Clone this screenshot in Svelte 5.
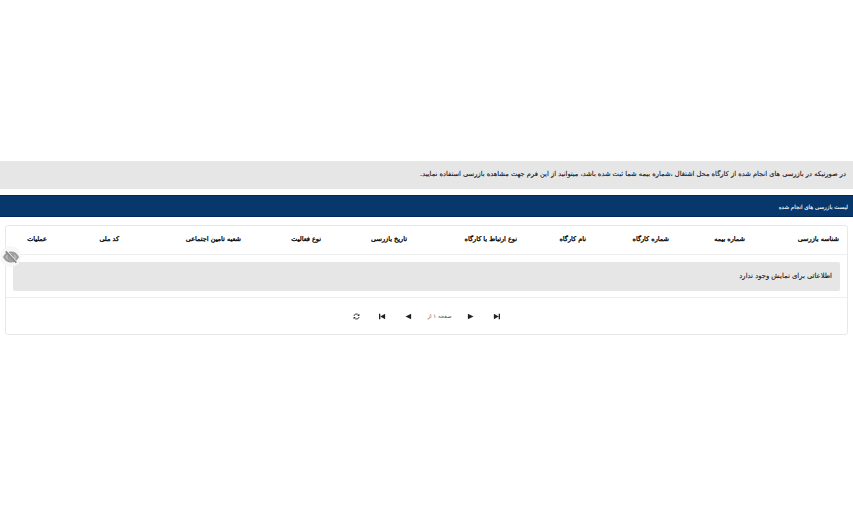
<script>
  const columns = [
    { title: 'شناسه بازرسی', width: 94 },
    { title: 'شماره بیمه', width: 76 },
    { title: 'شماره کارگاه', width: 83 },
    { title: 'نام کارگاه', width: 69 },
    { title: 'نوع ارتباط با کارگاه', width: 110 },
    { title: 'تاریخ بازرسی', width: 86 },
    { title: 'نوع فعالیت', width: 80 },
    { title: 'شعبه تامین اجتماعی', width: 122 },
    { title: 'کد ملی', width: 72 },
    { title: 'عملیات', width: 43 }
  ];
</script>

<main dir="rtl">
  <p class="notice">در صورتیکه در بازرسی های انجام شده از کارگاه محل اشتغال ،شماره بیمه شما ثبت شده باشد، میتوانید از این فرم جهت مشاهده بازرسی استفاده نمایید.</p>
  <div class="title-bar">لیست بازرسی های انجام شده</div>

  <section class="card">
    <div class="head">
      {#each columns as col}
        <div class="cell" style="width: {col.width}px">{col.title}</div>
      {/each}
    </div>

    <div class="body">
      <div class="empty">اطلاعاتی برای نمایش وجود ندارد</div>
    </div>

    <div class="pager">
      <button aria-label="last">
        <svg viewBox="0 0 8 8"><path d="M8 .8H6.500v6.400H8zM1 .8v6.400L6.500 4z" /></svg>
      </button>
      <button aria-label="next">
        <svg viewBox="0 0 8 8"><path d="M1 .8v6.400L7.500 4z" /></svg>
      </button>
      <span class="page-text">صفحه ۱ از</span>
      <button aria-label="previous">
        <svg viewBox="0 0 8 8"><path d="M7 .8v6.400L.5 4z" /></svg>
      </button>
      <button aria-label="first">
        <svg viewBox="0 0 8 8"><path d="M0 .8h1.500v6.400H0zM7 .8v6.400L1.500 4z" /></svg>
      </button>
      <button aria-label="refresh">
        <svg viewBox="0 0 8 8"><path class="ring" d="M1 3.400A3 3 0 0 1 6.400 2.400M7 4.600A3 3 0 0 1 1.600 5.600" /><path d="M7.300 .8v2.600H4.900zM.7 7.200V4.600h2.400z" /></svg>
      </button>
    </div>

    <div class="eye">
      <svg viewBox="0 0 24 24">
        <path class="lid" d="M1.500 12C4 7.500 7.600 5.200 12 5.200s8 2.300 10.500 6.800C20 16.500 16.400 18.800 12 18.800S4 16.500 1.500 12z" />
        <circle cx="12" cy="12" r="3.600" />
        <path class="gap" d="M5.500 3L21.500 20" />
        <path class="slash" d="M4 3.500L20 20.500" />
      </svg>
    </div>
  </section>
</main>

<style>
  :global(body) {
    margin: 0;
    background: #fff;
  }

  main {
    padding-top: 161px;
    font-family: "DejaVu Sans", "Noto Sans", sans-serif;
    color: #111;
  }

  .notice {
    margin: 0;
    height: 28px;
    line-height: 27px;
    padding-right: 7px;
    background: #e6e6e6;
    font-size: 6.700px;
    -webkit-text-stroke: 0.1px #111;
    white-space: nowrap;
    overflow: hidden;
  }

  .title-bar {
    margin-top: 6px;
    height: 22px;
    line-height: 22px;
    padding-right: 5px;
    background: #08376b;
    border-top: 1px solid #06285a;
    border-bottom: 1px solid #06285a;
    box-sizing: border-box;
    color: #fff;
    font-size: 5.500px;
    -webkit-text-stroke: 0.1px #fff;
  }

  .card {
    position: relative;
    margin: 8px 5px 0;
    height: 110px;
    box-sizing: border-box;
    border: 1px solid #e8e8e8;
    border-radius: 3px;
  }

  .head {
    display: flex;
    height: 29px;
    box-sizing: border-box;
    border-bottom: 1px solid #eee;
  }

  .cell {
    flex: none;
    box-sizing: border-box;
    padding-right: 8px;
    line-height: 27px;
    font-size: 6.500px;
    -webkit-text-stroke: 0.3px #000;
    color: #000;
    white-space: nowrap;
  }

  .body {
    height: 43px;
    padding: 7px 7px 6px;
    box-sizing: border-box;
    border-bottom: 1px solid #eee;
  }

  .empty {
    height: 29px;
    line-height: 28px;
    padding-right: 8px;
    background: #e6e6e6;
    border-radius: 2px;
    font-size: 6.800px;
    -webkit-text-stroke: 0.1px #111;
  }

  .pager {
    display: flex;
    justify-content: center;
    align-items: center;
    height: 36px;
  }

  .pager button {
    display: flex;
    align-items: center;
    justify-content: center;
    width: 26px;
    height: 20px;
    padding: 0;
    border: 0;
    background: none;
  }

  .pager svg {
    width: 7px;
    height: 7px;
    fill: #222;
  }

  .ring {
    fill: none;
    stroke: #222;
    stroke-width: 1;
  }

  .page-text {
    width: 36px;
    text-align: center;
    font-size: 5.400px;
    color: #555;
    white-space: nowrap;
  }

  .eye {
    position: absolute;
    left: -6px;
    top: 20px;
    display: flex;
    align-items: center;
    justify-content: center;
    width: 21px;
    height: 21px;
    border-radius: 50%;
    background: #f7f7f7;
  }

  .eye svg {
    width: 16px;
    height: 16px;
    fill: none;
    stroke: #999;
    stroke-width: 2.600;
  }

  .lid {
    fill: #b5b5b5;
  }

  .gap {
    stroke: #f7f7f7;
    stroke-width: 2;
  }

  .slash {
    stroke: #8a8a8a;
  }
</style>
